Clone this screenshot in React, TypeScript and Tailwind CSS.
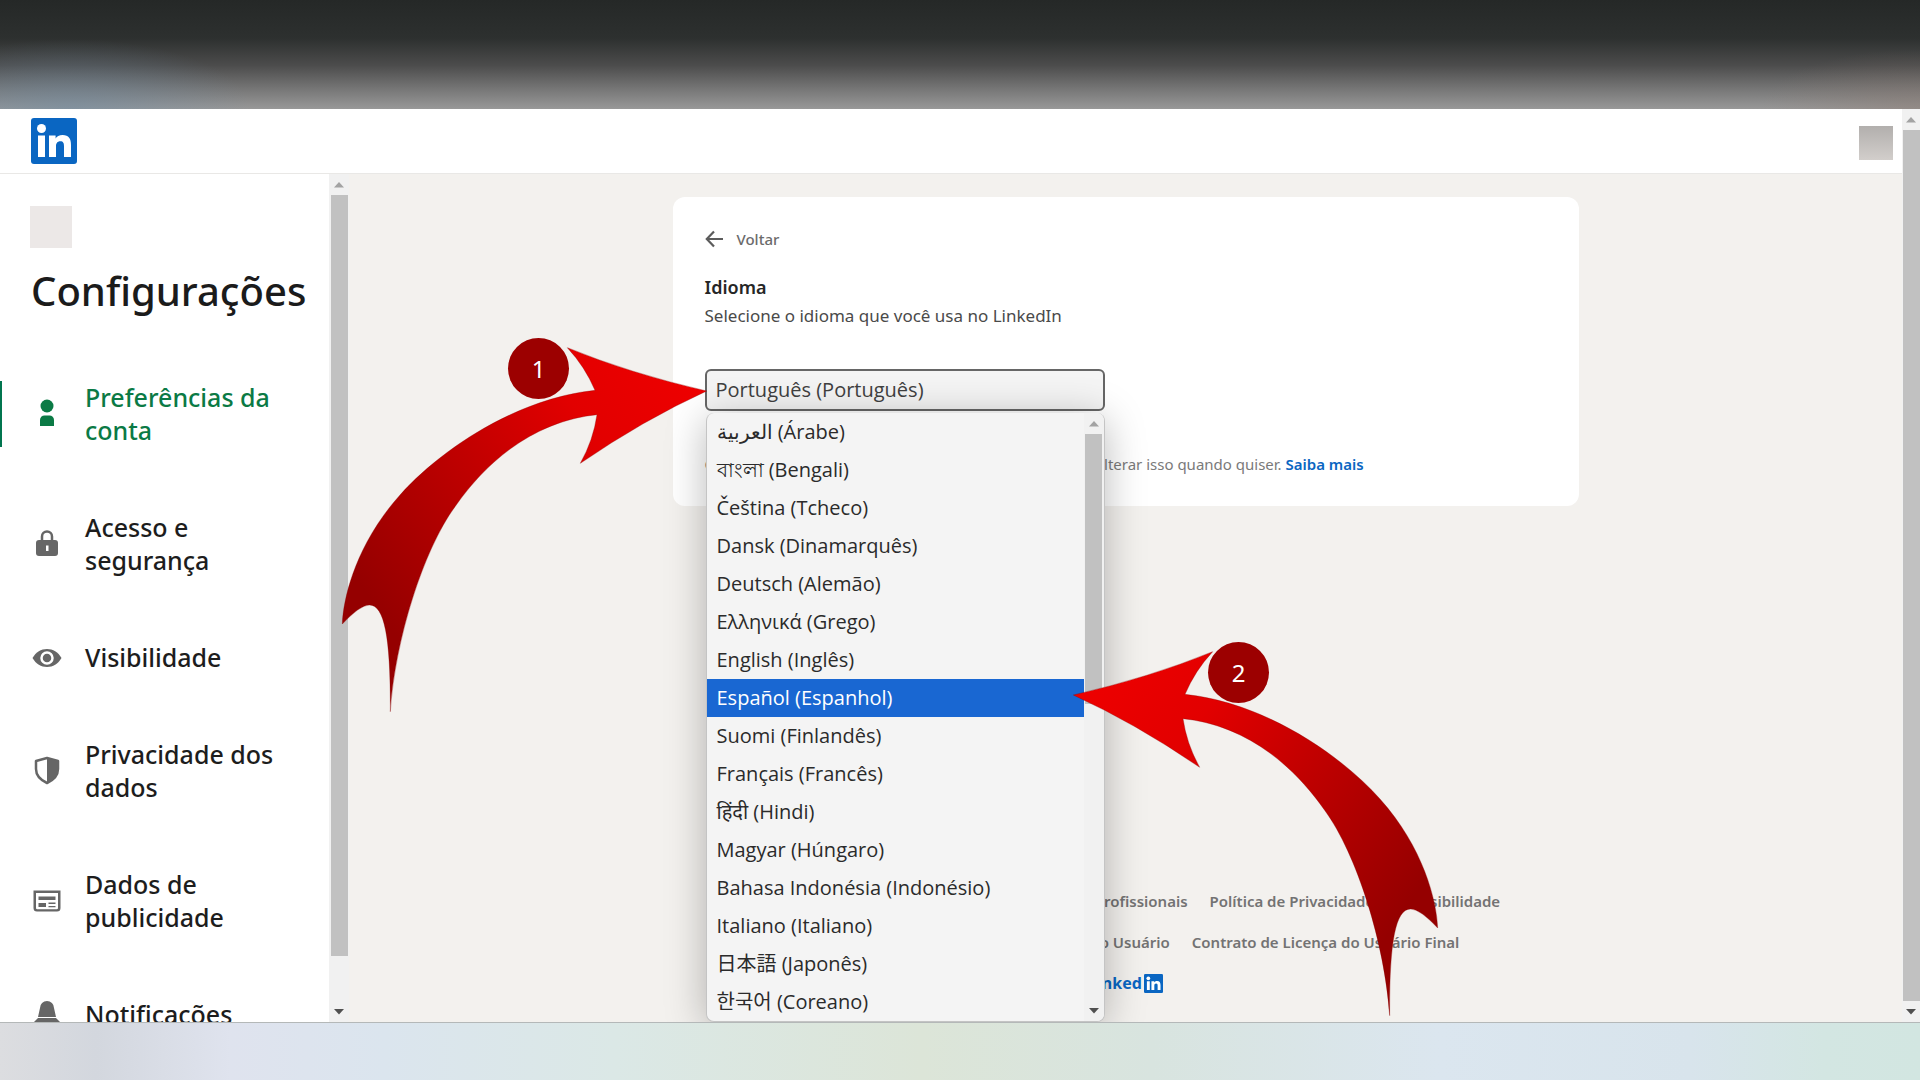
import React from 'react';

interface ScrollBarProps {
  className?: string;
  thumbClassName: string;
}

const ScrollBar = ({ className = '', thumbClassName }: ScrollBarProps) => (
  <div aria-hidden="true" className={`flex shrink-0 flex-col items-center justify-between bg-[#f1f1f1] ${className}`}>
    <svg viewBox="0 0 10 6" className="h-[21px] w-[10px] shrink-0" fill="#a3a3a3">
      <path d="M0 6 5 0.5 10 6z" />
    </svg>
    <div className={`w-[17px] bg-[#c1c1c1] ${thumbClassName}`} />
    <div className="flex-1" />
    <svg viewBox="0 0 10 6" className="h-[21px] w-[10px] shrink-0" fill="#505050">
      <path d="M0 0.5 5 6 10 0.5z" />
    </svg>
  </div>
);

const LinkedInMark = ({ className }: { className: string }) => (
  <svg viewBox="0 0 46 46" className={className} aria-label="LinkedIn" role="img">
    <rect width="46" height="46" rx="3" fill="#0a66c2" />
    <circle cx="10.5" cy="10.5" r="4.5" fill="#fff" />
    <path
      fill="#fff"
      d="M7 17.500h7V39H7zM18 17.500h6.600v3c1.200-2 3.600-3.500 7-3.500 6.200 0 8.400 3.800 8.400 10V39h-7V28.300c0-3-.7-5-3.700-5s-4.300 2.200-4.300 5V39h-7z"
    />
  </svg>
);

const PersonIcon = () => (
  <svg viewBox="0 0 30 30" className="h-[30px] w-[30px] shrink-0" fill="currentColor">
    <circle cx="15" cy="7" r="6.500" />
    <path d="M8 27v-6a4.500 4.500 0 0 1 4.500-4.500h5a4.500 4.500 0 0 1 4.500 4.500v6z" />
  </svg>
);

const LockIcon = () => (
  <svg viewBox="0 0 30 30" className="h-[30px] w-[30px] shrink-0">
    <path d="M10 12V7.500a5 5 0 0 1 10 0V12" fill="none" stroke="currentColor" strokeWidth="2.500" />
    <rect x="4" y="11" width="22" height="16" rx="3" fill="currentColor" />
    <rect x="14" y="16.500" width="2.500" height="5.500" fill="#fff" />
  </svg>
);

const EyeIcon = () => (
  <svg viewBox="0 0 30 30" className="h-[30px] w-[30px] shrink-0">
    <path d="M0.500 15C4 9 9 6 15 6s11 3 14.500 9C26 21 21 24 15 24S4 21 0.500 15z" fill="currentColor" />
    <circle cx="15" cy="15" r="5.500" fill="currentColor" stroke="#fff" strokeWidth="2.500" />
  </svg>
);

const ShieldIcon = () => (
  <svg viewBox="0 0 30 30" className="h-[30px] w-[30px] shrink-0">
    <path
      d="M15 2 26 5v8c0 7-4.500 11-11 14C8.500 24 4 20 4 13V5z"
      fill="none"
      stroke="currentColor"
      strokeWidth="2.500"
      strokeLinejoin="round"
    />
    <path d="M15 2 26 5v8c0 7-4.500 11-11 14z" fill="currentColor" />
  </svg>
);

const AdIcon = () => (
  <svg viewBox="0 0 30 30" className="h-[30px] w-[30px] shrink-0" fill="currentColor">
    <path d="M1.500 4.500h27V22a3.500 3.500 0 0 1-3.500 3.500H5A3.500 3.500 0 0 1 1.500 22zM4 7v15a1.200 1.200 0 0 0 1.200 1.200h19.600A1.200 1.200 0 0 0 26 22V7z" />
    <path d="M6.500 10.500h17v3.500h-17zM6.500 17h7.500v4H6.500zM16.500 16.500h7V18h-7zM16.500 20h7v1.300h-7z" />
  </svg>
);

const BellIcon = () => (
  <svg viewBox="0 0 30 30" className="h-[30px] w-[30px] shrink-0" fill="currentColor">
    <path d="M6 17 8 8a7 7 0 0 1 14 0l2 9zM2 22l4-4h18l4 4v1H2zM11 24h8a4 4 0 0 1-8 0z" />
  </svg>
);

const ArrowLeftIcon = () => (
  <svg viewBox="0 0 18 18" className="h-[18px] w-[18px]" fill="none" stroke="#5c5c5c" strokeWidth="2.200">
    <path d="M18 9H2M9 1.500 1.800 9 9 16.500" />
  </svg>
);

const CurvedArrow = ({ id, className }: { id: string; className: string }) => (
  <svg viewBox="0 0 1200 1200" aria-hidden="true" className={`pointer-events-none absolute h-[400px] w-[400px] ${className}`}>
    <defs>
      <linearGradient id={id} gradientUnits="userSpaceOnUse" x1="1130" y1="213" x2="150" y2="880">
        <stop offset="0" stopColor="#ee0000" />
        <stop offset="0.300" stopColor="#e20000" />
        <stop offset="0.600" stopColor="#c00000" />
        <stop offset="1" stopColor="#950000" />
      </linearGradient>
    </defs>
    <path
      fill={`url(#${id})`}
      stroke="#8a0000"
      strokeOpacity="0.500"
      strokeWidth="2"
      d="M1130 213Q900 160 712 83Q765 140 795 211C560 235 330 390 210 525C80 670 40 830 37 912Q90 855 118 855C165 855 182 960 181 1175C195 960 280 690 375 560C490 395 640 300 801 284Q790 360 751 430Q940 300 1130 213Z"
    />
  </svg>
);

const StepBadge = ({ step, className }: { step: number; className: string }) => (
  <div
    className={`absolute flex h-[61px] w-[61px] items-center justify-center rounded-full bg-[#9c0000] text-2xl text-white ${className}`}
  >
    {step}
  </div>
);

const menuItems = [
  { label: 'Preferências da conta', icon: <PersonIcon />, active: true },
  { label: 'Acesso e segurança', icon: <LockIcon /> },
  { label: 'Visibilidade', icon: <EyeIcon /> },
  { label: 'Privacidade dos dados', icon: <ShieldIcon /> },
  { label: 'Dados de publicidade', icon: <AdIcon /> },
  { label: 'Notificações', icon: <BellIcon /> },
];

const languages = [
  'العربية (Árabe)',
  'বাংলা (Bengali)',
  'Čeština (Tcheco)',
  'Dansk (Dinamarquês)',
  'Deutsch (Alemão)',
  'Ελληνικά (Grego)',
  'English (Inglês)',
  'Español (Espanhol)',
  'Suomi (Finlandês)',
  'Français (Francês)',
  'हिंदी (Hindi)',
  'Magyar (Húngaro)',
  'Bahasa Indonésia (Indonésio)',
  'Italiano (Italiano)',
  '日本語 (Japonês)',
  '한국어 (Coreano)',
];

const highlighted = 'Español (Espanhol)';

const footerRows = [
  ['Central de Ajuda', 'Diretrizes de Comunidades Profissionais', 'Política de Privacidade', 'Acessibilidade'],
  ['Preferências dos convidados', 'Contrato do Usuário', 'Contrato de Licença do Usuário Final'],
];

const Sidebar = () => (
  <aside className="flex w-[349px] shrink-0 bg-white">
    <div className="min-w-0 flex-1 overflow-hidden pt-8">
      <div className="ml-[30px] h-[42px] w-[42px] bg-[#ece8e7]" />
      <h1 className="mt-[15px] ml-[31px] text-[40px] leading-[56px] font-medium whitespace-nowrap text-[#1b1b1b]">
        Configurações
      </h1>
      <nav className="mt-[62px] flex flex-col gap-16">
        {menuItems.map((item) => (
          <a
            key={item.label}
            href="#"
            className={`flex items-center gap-[23px] border-l-2 pl-[30px] pr-8 text-[25px] leading-[33px] font-medium ${
              item.active ? 'border-[#01754f] text-[#0b7a45]' : 'border-transparent text-[#666666]'
            }`}
          >
            {item.icon}
            <span className={item.active ? '' : 'text-[#1d1d1d]'}>{item.label}</span>
          </a>
        ))}
      </nav>
    </div>
    <ScrollBar className="w-5" thumbClassName="h-[761px]" />
  </aside>
);

const LanguagePicker = () => (
  <div className="relative w-[400px] font-['Open_Sans','Noto_Sans','Noto_Sans_CJK_JP','Noto_Sans_CJK_KR',sans-serif]">
    <select
      id="language"
      defaultValue="pt"
      className="block h-[42px] w-full appearance-none rounded-md border-2 border-[#666666] bg-[#f4f4f4] px-[9px] text-xl text-[#404040] outline-none"
    >
      <option value="pt">Português (Português)</option>
    </select>
    <div className="absolute inset-x-0 top-full mt-[2px] ml-px flex overflow-hidden rounded-lg border border-t-0 border-[#c4c4c4] bg-[#f4f4f4] shadow-[0_6px_40px_rgba(0,0,0,0.28)]">
      <div role="listbox" aria-label="Idioma" className="flex-1">
        {languages.map((language) => (
          <button
            key={language}
            type="button"
            role="option"
            aria-selected={language === highlighted}
            className={`block h-[38px] w-full pl-[10px] text-left text-xl leading-[38px] whitespace-nowrap ${
              language === highlighted ? 'bg-[#1967d2] text-white' : 'text-[#2b2b2b]'
            }`}
          >
            {language}
          </button>
        ))}
      </div>
      <ScrollBar className="w-5" thumbClassName="h-[270px]" />
    </div>
  </div>
);

const Footer = () => (
  <footer className="mt-auto flex flex-col items-center pb-[27px] text-[15px] font-semibold text-[#737373]">
    {footerRows.map((row) => (
      <div key={row[0]} className="flex h-[41px] items-center gap-[22px] whitespace-nowrap">
        {row.map((link) => (
          <a key={link} href="#">
            {link}
          </a>
        ))}
      </div>
    ))}
    <div className="mt-2 flex items-center gap-[2px] text-base leading-6 font-bold text-[#0a66c2]">
      Linked
      <LinkedInMark className="h-[19px] w-[19px]" />
    </div>
  </footer>
);

const App = () => {
  return (
    <div className="relative flex h-screen flex-col overflow-hidden bg-white font-['Noto_Sans','Noto_Sans_CJK_JP','Noto_Sans_CJK_KR',sans-serif]">
      <div className="h-[109px] shrink-0 bg-[radial-gradient(ellipse_180px_70px_at_70px_100%,rgba(110,140,165,0.5),transparent),radial-gradient(ellipse_160px_60px_at_100%_100%,rgba(140,120,110,0.4),transparent),linear-gradient(to_bottom,#252827_0%,#2d302f_35%,#4c4c4c_60%,#777777_82%,#989898_100%)]" />

      <div className="flex min-h-0 flex-1 border-b border-[#b4b8b8]">
        <div className="flex min-w-0 flex-1 flex-col">
          <header className="flex h-[65px] shrink-0 items-center justify-between border-b border-[#e9e8e6] bg-white pr-[9px] pl-[31px]">
            <a href="#">
              <LinkedInMark className="h-[46px] w-[46px]" />
            </a>
            <div className="mt-1 h-[34px] w-[34px] bg-linear-to-b from-[#b2afad] to-[#d2cecb]" />
          </header>

          <div className="flex min-h-0 flex-1">
            <Sidebar />
            <main className="flex min-w-0 flex-1 flex-col items-center overflow-hidden bg-[#f3f1ee] pt-[23px]">
              <section className="w-full max-w-[906px] rounded-xl bg-white px-8 py-7">
                <button type="button" className="flex h-7 items-center gap-[14px] text-[15px] font-medium text-[#6b6b6b]">
                  <ArrowLeftIcon />
                  Voltar
                </button>
                <label htmlFor="language" className="mt-5 block text-lg leading-7 font-semibold text-[#262626]">
                  Idioma
                </label>
                <p className="mt-px mb-[39px] text-[17px] leading-7 text-[#4a4a4a]">Selecione o idioma que você usa no LinkedIn</p>
                <LanguagePicker />
                <p className="mt-[39px] text-[15px] leading-7 whitespace-nowrap text-[#7a7a7a]">
                  O idioma selecionado vale para todo o site e você pode alterar isso quando quiser.{' '}
                  <a href="#" className="font-semibold text-[#0a66c2]">
                    Saiba mais
                  </a>
                </p>
              </section>
              <Footer />
            </main>
          </div>
        </div>
        <ScrollBar className="w-[18px]" thumbClassName="h-[871px]" />
      </div>

      <div className="h-[57px] shrink-0 bg-[linear-gradient(to_right,#dcdde0_0%,#d3d7de_5%,#dfe3ee_12%,#dbe5ee_20%,#dbe8e6_32%,#dce5d8_48%,#d8e4df_60%,#dbe6ef_75%,#d8e4ec_88%,#d3e6e2_95%,#d2e6e1_100%)]" />

      <CurvedArrow id="arrow-select" className="top-80 left-[330px]" />
      <StepBadge step={1} className="top-[338px] left-[508px]" />
      <CurvedArrow id="arrow-option" className="top-[624px] left-[1050px] -scale-x-100" />
      <StepBadge step={2} className="top-[642px] left-[1208px]" />
    </div>
  );
};

export default App;
